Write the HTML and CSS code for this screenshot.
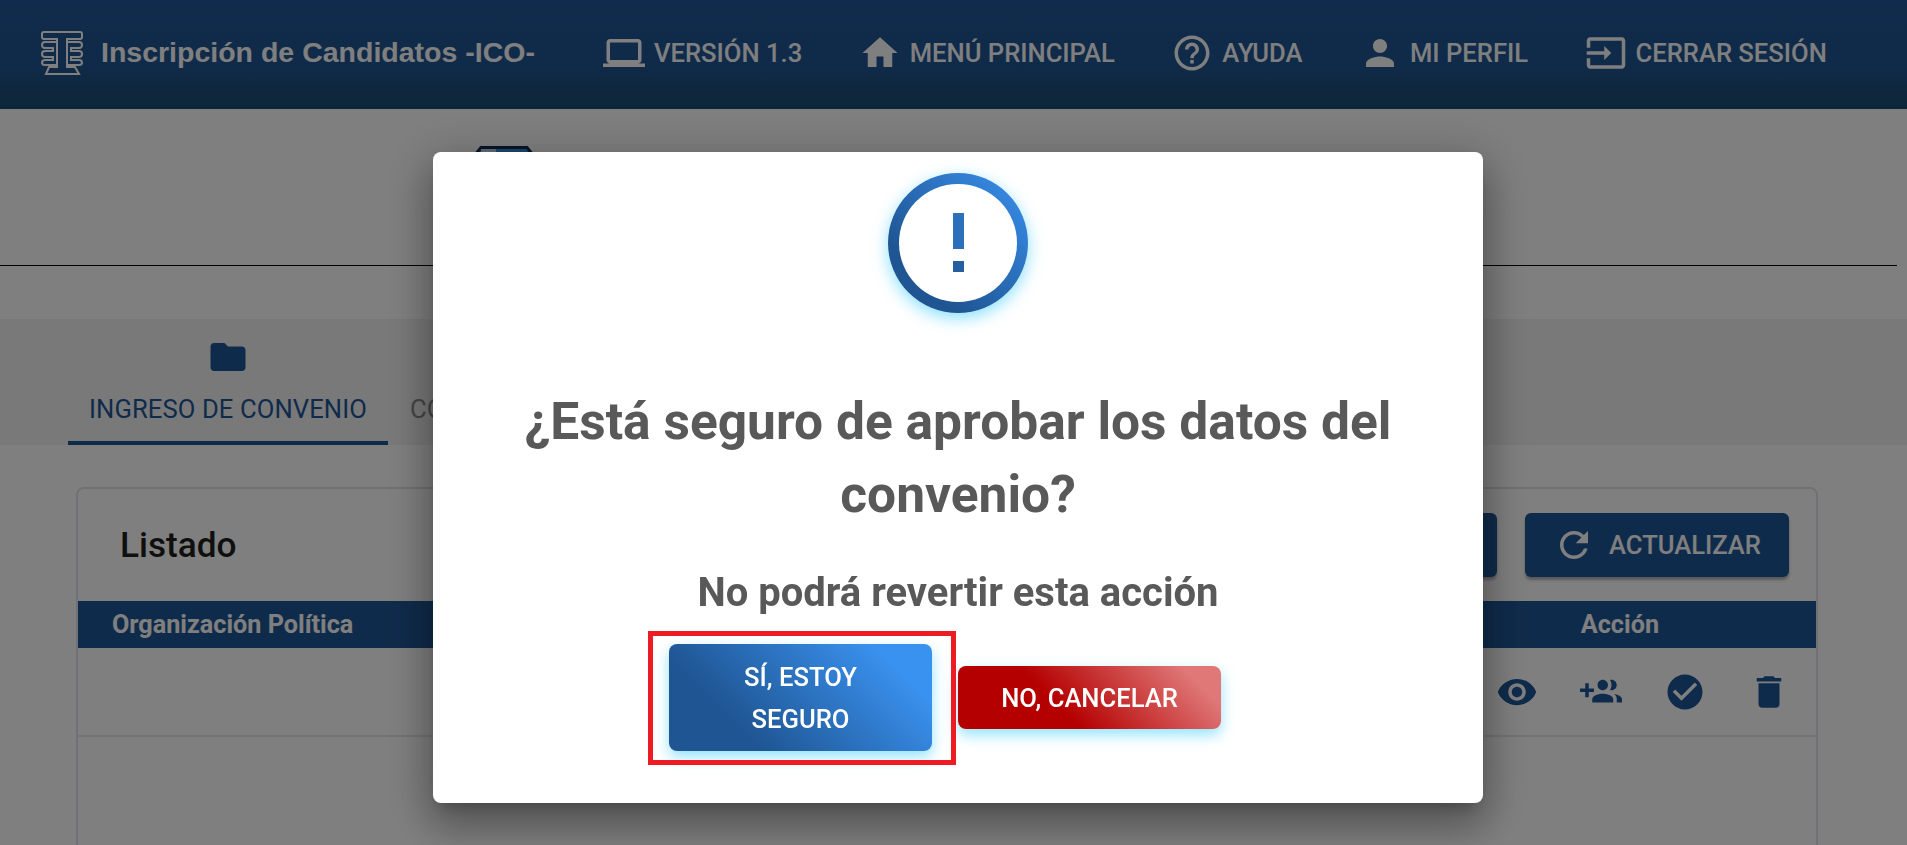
FILE: index.html
```html
<!DOCTYPE html>
<html lang="es">
<head>
    <meta charset="UTF-8">
    <meta name="viewport" content="width=device-width, initial-scale=1.0">
    <title>Inscripción de Candidatos -ICO-</title>
    <link rel="stylesheet" href="styles.css">
</head>
<body>

    <header class="topbar">
        <div class="brand">
            <svg class="brand-logo" viewBox="0 0 42 44" fill="none" stroke="currentColor" stroke-width="2">
                <path d="M3 1h36q2 0 2 2v3q0 2-2 2H26v28l8 0 4 7H5l3-7 8 0V8H3q-2 0-2-2V3q0-2 2-2z"/>
                <path d="M16 11H4q-3 0-3 3t3 3h8v3H4q-3 0-3 3t3 3h8v3H4q-3 0-3 2.500t3 2.500h12"/>
                <path d="M26 11h12q3 0 3 3t-3 3h-8v3h8q3 0 3 3t-3 3h-8v3h8q3 0 3 2.500t-3 2.500H26"/>
            </svg>
            <span class="brand-name">Inscripción de Candidatos -ICO-</span>
        </div>
        <nav class="nav">
            <a class="nav-item">
                <svg class="nav-icon" viewBox="0 0 24 24" fill="currentColor"><path d="M20 18c1.100 0 2-.9 2-2V6c0-1.100-.9-2-2-2H4c-1.100 0-2 .9-2 2v10c0 1.100.9 2 2 2H0v2h24v-2h-4zM4 6h16v10H4V6z"/></svg>
                VERSIÓN 1.3
            </a>
            <a class="nav-item">
                <svg class="nav-icon" viewBox="0 0 24 24" fill="currentColor"><path d="M10 20v-6h4v6h5v-8h3L12 3 2 12h3v8z"/></svg>
                MENÚ PRINCIPAL
            </a>
            <a class="nav-item">
                <svg class="nav-icon" viewBox="0 0 24 24" fill="currentColor"><path d="M11 18h2v-2h-2v2zm1-16C6.480 2 2 6.480 2 12s4.480 10 10 10 10-4.480 10-10S17.520 2 12 2zm0 18c-4.410 0-8-3.590-8-8s3.590-8 8-8 8 3.590 8 8-3.590 8-8 8zm0-14c-2.210 0-4 1.790-4 4h2c0-1.100.9-2 2-2s2 .9 2 2c0 2-3 1.750-3 5h2c0-2.250 3-2.500 3-5 0-2.210-1.790-4-4-4z"/></svg>
                AYUDA
            </a>
            <a class="nav-item">
                <svg class="nav-icon" viewBox="0 0 24 24" fill="currentColor"><path d="M12 12c2.210 0 4-1.790 4-4s-1.790-4-4-4-4 1.790-4 4 1.790 4 4 4zm0 2c-2.670 0-8 1.340-8 4v2h16v-2c0-2.660-5.330-4-8-4z"/></svg>
                MI PERFIL
            </a>
            <a class="nav-item">
                <svg class="nav-icon" viewBox="0 0 24 24" fill="currentColor"><path d="M21 3.010H3c-1.100 0-2 .9-2 2V9h2V4.990h18v14.030H3V15H1v4.010c0 1.100.9 1.980 2 1.980h18c1.100 0 2-.88 2-1.980v-14c0-1.110-.9-2-2-2zM11 16l4-4-4-4v3H1v2h10v3z"/></svg>
                CERRAR SESIÓN
            </a>
        </nav>
    </header>

    <section class="page-title">
        <svg class="page-title-icon" viewBox="0 0 62 62">
            <path d="M8 1.500h46l6.500 8V62H1.500V9.500z" fill="#3a90d8" stroke="#0c2b4f" stroke-width="3"/>
            <rect x="8" y="3" width="15" height="20" fill="#c8d8e8"/>
        </svg>
    </section>

    <div class="tabs">
        <div class="tab tab-active">
            <svg class="tab-icon" viewBox="0 0 24 24" fill="currentColor"><path d="M10 4H4c-1.100 0-1.990.9-1.990 2L2 18c0 1.100.9 2 2 2h16c1.100 0 2-.9 2-2V8c0-1.100-.9-2-2-2h-8l-2-2z"/></svg>
            <span>INGRESO DE CONVENIO</span>
        </div>
        <div class="tab">
            <span class="tab-icon"></span>
            <span>CO</span>
        </div>
    </div>

    <main class="card">
        <div class="card-head">
            <h2 class="card-title">Listado</h2>
            <div class="card-actions">
                <button class="btn-primary btn-blank"></button>
                <button class="btn-primary">
                    <svg class="btn-icon" viewBox="0 0 24 24" fill="currentColor"><path d="M17.650 6.350C16.200 4.900 14.210 4 12 4c-4.420 0-7.990 3.580-7.990 8s3.570 8 7.990 8c3.730 0 6.840-2.550 7.730-6h-2.080c-.82 2.330-3.040 4-5.650 4-3.310 0-6-2.690-6-6s2.690-6 6-6c1.660 0 3.140.69 4.220 1.780L13 11h7V4l-2.350 2.350z"/></svg>
                    ACTUALIZAR
                </button>
            </div>
        </div>
        <div class="table-head">
            <span>Organización Política</span>
            <span class="col-action">Acción</span>
        </div>
        <div class="table-row">
            <div class="row-actions">
                <svg class="row-icon" viewBox="0 0 24 24" fill="currentColor"><path d="M12 4.500C7 4.500 2.730 7.610 1 12c1.730 4.390 6 7.500 11 7.500s9.270-3.110 11-7.500c-1.730-4.390-6-7.500-11-7.500zM12 17c-2.760 0-5-2.240-5-5s2.240-5 5-5 5 2.240 5 5-2.240 5-5 5zm0-8c-1.660 0-3 1.340-3 3s1.340 3 3 3 3-1.340 3-3-1.340-3-3-3z"/></svg>
                <svg class="row-icon" viewBox="0 0 24 24" fill="currentColor"><path d="M8 10H5V7H3v3H0v2h3v3h2v-3h3v-2zm10 1c1.660 0 2.990-1.340 2.990-3S19.660 5 18 5c-.32 0-.63.05-.91.14.57.81.9 1.790.9 2.860s-.34 2.040-.9 2.860c.28.09.59.14.91.14zm-5 0c1.660 0 2.990-1.340 2.990-3S14.660 5 13 5s-3 1.340-3 3 1.340 3 3 3zm6.620 2.160c.83.73 1.380 1.660 1.380 2.840v2h3v-2c0-1.540-2.370-2.490-4.380-2.840zM13 13c-2 0-6 1-6 3v2h12v-2c0-2-4-3-6-3z"/></svg>
                <svg class="row-icon" viewBox="0 0 24 24" fill="currentColor"><path d="M12 2C6.480 2 2 6.480 2 12s4.480 10 10 10 10-4.480 10-10S17.520 2 12 2zm-2 15l-5-5 1.410-1.410L10 14.170l7.590-7.590L19 8l-9 9z"/></svg>
                <svg class="row-icon" viewBox="0 0 24 24" fill="currentColor"><path d="M6 19c0 1.100.9 2 2 2h8c1.100 0 2-.9 2-2V7H6v12zM19 4h-3.500l-1-1h-5l-1 1H5v2h14V4z"/></svg>
            </div>
        </div>
    </main>

    <div class="overlay">
        <div class="modal">
            <div class="alert-ring">
                <div class="alert-inner">
                    <span class="alert-bar"></span>
                    <span class="alert-dot"></span>
                </div>
            </div>
            <h1 class="modal-title">¿Está seguro de aprobar los datos del convenio?</h1>
            <p class="modal-text">No podrá revertir esta acción</p>
            <div class="modal-actions">
                <button class="btn-confirm">SÍ, ESTOY SEGURO</button>
                <button class="btn-cancel">NO, CANCELAR</button>
            </div>
        </div>
    </div>

</body>
</html>
```

FILE: styles.css
```css
* {
    box-sizing: border-box;
}
html, body {
    height: 845px;
    overflow: hidden;
}
body {
    margin: 0;
    background-color: #fff;
    font-family: Roboto, Arial, sans-serif;
    color: #222;
}

/* top bar */
.topbar {
    height: 109px;
    display: flex;
    align-items: center;
    padding: 0 0 4px 41px;
    background: linear-gradient(180deg, #225798 0%, #205592 60%, #1b4c70 100%);
    color: #fff;
}
.brand {
    display: flex;
    align-items: center;
    width: 562px;
}
.brand-logo {
    width: 42px;
    height: 44px;
    margin-right: 18px;
}
.brand-name {
    font-family: "Liberation Sans", Arial, sans-serif;
    font-size: 28.500px;
    font-weight: bold;
}
.nav {
    display: flex;
    align-items: center;
}
.nav-item {
    display: flex;
    align-items: center;
    font-size: 25.600px;
    font-weight: 500;
    margin-right: 56.500px;
}
.nav-icon {
    width: 42px;
    height: 42px;
    margin-right: 9px;
}

/* page title */
.page-title {
    height: 157px;
    border-bottom: 1px solid #000;
    margin-right: 10px;
    padding: 37px 0 0 473px;
}
.page-title-icon {
    display: block;
    width: 62px;
    height: 62px;
}

/* tabs */
.tabs {
    display: flex;
    height: 126px;
    margin-top: 53px;
    padding-left: 68px;
    background-color: #f2f2f2;
}
.tab {
    display: flex;
    flex-direction: column;
    align-items: flex-start;
    width: 320px;
    padding: 17px 22px 0;
    font-size: 25.600px;
    letter-spacing: .1px;
    white-space: nowrap;
    color: #8a8a8a;
}
.tab-active {
    align-items: center;
    color: #1f5797;
    border-bottom: 4px solid #1f5797;
}
.tab-icon {
    display: block;
    flex-shrink: 0;
    width: 42px;
    height: 42px;
    margin-bottom: 16px;
}

/* card */
.card {
    margin: 42px 89px 0 76px;
    height: 600px;
    border: 2px solid #e2e2ea;
    border-radius: 8px;
}
.card-head {
    display: flex;
    align-items: center;
    justify-content: space-between;
    height: 112px;
    padding: 0 27px 0 42px;
}
.card-title {
    margin: 0;
    font-size: 35.200px;
    font-weight: 500;
    color: #1e1e1e;
}
.card-actions {
    display: flex;
    gap: 28px;
}
.btn-primary {
    display: flex;
    align-items: center;
    justify-content: center;
    width: 264px;
    height: 64px;
    border: none;
    border-radius: 6px;
    background-color: #1f5797;
    color: #fff;
    font-family: Roboto, Arial, sans-serif;
    font-size: 25.600px;
    font-weight: 500;
    box-shadow: 0 3px 3px rgba(0, 0, 0, .3);
}
.btn-icon {
    width: 42px;
    height: 42px;
    margin-right: 14px;
}
.table-head {
    display: flex;
    justify-content: space-between;
    height: 47px;
    align-items: center;
    padding: 0 157px 0 34px;
    background-color: #1f5797;
    color: #fff;
    font-size: 25.200px;
    font-weight: 700;
}
.table-row {
    height: 89px;
    border-bottom: 2px solid #e8e8ee;
    display: flex;
    justify-content: flex-end;
    align-items: center;
    padding-right: 26px;
}
.row-actions {
    display: flex;
    gap: 42px;
}
.row-icon {
    width: 42px;
    height: 42px;
    color: #1f5797;
}

/* modal */
.overlay {
    position: fixed;
    inset: 0;
    padding: 152px 0 0 433px;
    background-color: rgba(0, 0, 0, .5);
}
.modal {
    width: 1050px;
    height: 651px;
    padding-top: 21px;
    background-color: #fff;
    border-radius: 8px;
    box-shadow: 0 11px 15px -7px rgba(0, 0, 0, .2), 0 24px 38px 3px rgba(0, 0, 0, .2), 0 9px 46px 8px rgba(0, 0, 0, .2);
    text-align: center;
}
.alert-ring {
    width: 140px;
    height: 140px;
    margin: 0 auto;
    padding: 11px;
    border-radius: 50%;
    background: linear-gradient(45deg, #1f5592 25%, #3a92f0 100%);
    box-shadow: 0 5px 16px rgba(60, 205, 255, .6);
}
.alert-inner {
    display: flex;
    flex-direction: column;
    align-items: center;
    height: 100%;
    padding-top: 29px;
    border-radius: 50%;
    background-color: #fff;
}
.alert-bar {
    width: 11px;
    height: 36px;
    background-color: #2c70bb;
}
.alert-dot {
    width: 11px;
    height: 11px;
    margin-top: 12px;
    background-color: #255f9f;
}
.modal-title {
    margin: 72px auto 0;
    width: 900px;
    font-size: 51.500px;
    font-weight: 700;
    line-height: 73px;
    color: #595959;
}
.modal-text {
    margin: 39px 0 0;
    font-size: 40px;
    font-weight: 700;
    line-height: 46px;
    color: #595959;
}
.modal-actions {
    display: flex;
    align-items: center;
    margin-top: 28px;
    padding-left: 236px;
    gap: 26px;
}
.btn-confirm, .btn-cancel {
    width: 263px;
    border: none;
    border-radius: 8px;
    color: #fff;
    font-family: Roboto, Arial, sans-serif;
    font-size: 25.600px;
    font-weight: 500;
    line-height: 42px;
    box-shadow: 0 6px 14px rgba(60, 205, 255, .55);
}
.btn-confirm {
    position: relative;
    height: 107px;
    padding: 0 60px;
    background: linear-gradient(45deg, #1f5592 25%, #3a92f0 85%);
}
/* red marker drawn round the button in the capture */
.btn-confirm::after {
    content: "";
    position: absolute;
    inset: -13px -24px -14px -21px;
    border: 5px solid #ed1c24;
}
.btn-cancel {
    height: 63px;
    background: linear-gradient(45deg, #b50000 38%, #e07878 88%);
}
```
